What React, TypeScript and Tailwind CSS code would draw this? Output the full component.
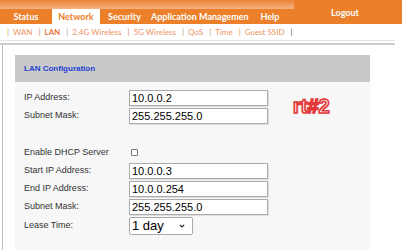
export default function App() {
  const tabs = [
    { label: "Status", w: "w-[52px]", active: false },
    { label: "Network", w: "w-[48px]", active: true },
    { label: "Security", w: "w-[49px]", active: false },
  ];

  const sub = ["WAN", "LAN", "2.4G Wireless", "5G Wireless", "QoS", "Time", "Guest SSID"];

  return (
    <div className="w-[402px] h-[250px] overflow-hidden bg-white font-['Liberation_Sans',Arial,sans-serif]">
      {/* top menu */}
      <header className="flex h-[24px] font-['Lato',sans-serif] font-bold text-[9px] text-white">
        <nav className="w-[294px] flex flex-col">
          <div className="h-[9px] bg-gradient-to-b from-[#ec8233] to-[#f5b283]" />
          <div className="flex-1 flex bg-[#ec7f2a]">
            {tabs.map((t) => (
              <div
                key={t.label}
                className={
                  t.active
                    ? `${t.w} flex items-center justify-center bg-white text-[#ec7f2a]`
                    : `${t.w} flex items-center justify-center`
                }
              >
                {t.label}
              </div>
            ))}
            <div className="w-[101px] pl-[2px] flex items-center overflow-hidden whitespace-nowrap">
              Application Managemen
            </div>
            <div className="flex-1 flex items-center justify-center pr-[4px]">Help</div>
          </div>
        </nav>
        <div className="flex-1 bg-[#ec7f2a] flex justify-center pt-[6px] pr-[6px]">Logout</div>
      </header>

      {/* sub menu */}
      <div className="h-[16px] flex items-center pl-[7px] font-['Lato',sans-serif] text-[8px] text-[#ee9262] whitespace-nowrap">
        {sub.map((s) => (
          <span key={s} className="flex items-center">
            <span className="text-[#c98f6a] mr-[4px]">|</span>
            <span className={s === "LAN" ? "text-[#e8682a] font-semibold mr-[6px]" : "mr-[6px]"}>{s}</span>
          </span>
        ))}
        <span className="text-[#44506a]">|</span>
      </div>

      {/* divider */}
      <div className="h-[5px] mr-[7px] border-t border-[#e4e4e4] border-b-2 border-b-[#cdcdcd]" />

      {/* main */}
      <main className="ml-[2px] h-[205px] border-l border-[#bcbcbc] pl-[12px] pt-[10px]">
        <div className="w-[355px]">
          <div className="h-[27px] bg-[#c9c9c9] pl-[9px] flex items-center text-[8px] font-bold text-[#1d3fd1]">
            LAN Configuration
          </div>
          <div className="relative h-[170px] bg-[#f7f7f7] pt-[8px] pl-[9px] text-[9px] text-[#333]">
            <div className="flex flex-col gap-[2px]">
              <Row label="IP Address:" value="10.0.0.2" />
              <Row label="Subnet Mask:" value="255.255.255.0" />
              <div className="h-[16px]" />
              <div className="flex items-center h-[17px]">
                <span className="w-[107px]">Enable DHCP Server</span>
                <span className="w-[7px] h-[7px] border border-[#767676] rounded-[1px] bg-white" />
              </div>
              <Row label="Start IP Address:" value="10.0.0.3" />
              <Row label="End IP Address:" value="10.0.0.254" />
              <Row label="Subnet Mask:" value="255.255.255.0" />
              <div className="flex items-center h-[18px]">
                <span className="w-[105px]">Lease Time:</span>
                <div className="w-[64px] h-[18px] border border-[#a9a9a9] bg-white rounded-[2px] flex items-center justify-between pl-[2px] pr-[7px] text-[13px] text-black">
                  1 day
                  <svg width="6" height="4" viewBox="0 0 6 4" fill="none" stroke="#222" strokeWidth="1.2">
                    <path d="M0.8 0.8l2.2 2.2L5.2 0.8" />
                  </svg>
                </div>
              </div>
            </div>

            <span className="absolute left-[278px] top-[14px] text-[20px] font-bold leading-none text-[#fff4f4] [-webkit-text-stroke:1.6px_#e2383a] [text-shadow:0_0_2px_#f7b0b0]">
              rt#2
            </span>
          </div>
        </div>
      </main>
    </div>
  );
}

function Row({ label, value }: { label: string; value: string }) {
  return (
    <div className="flex items-center h-[16px]">
      <span className="w-[105px]">{label}</span>
      <input
        readOnly
        value={value}
        className="w-[139px] h-[16px] border border-[#ababab] bg-white pl-[2px] text-[11px] text-black shadow-[1px_1px_0_#dedede] outline-none font-['Liberation_Sans',Arial,sans-serif]"
      />
    </div>
  );
}
